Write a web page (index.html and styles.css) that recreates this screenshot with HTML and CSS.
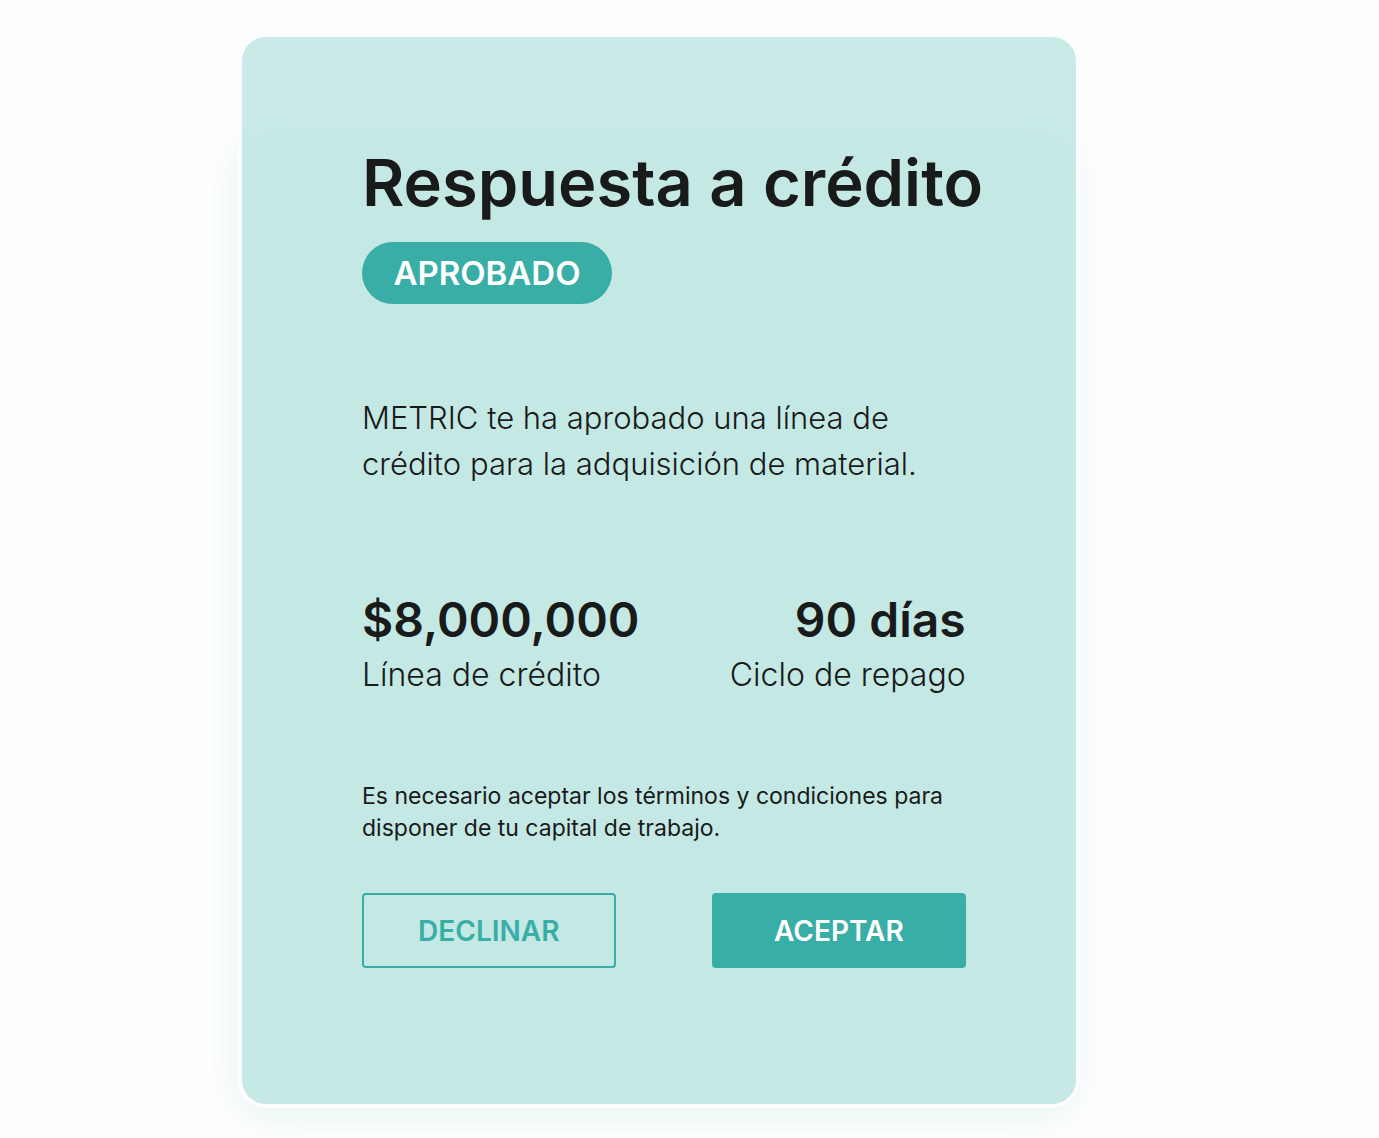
FILE: index.html
```html
<!DOCTYPE html>
<html lang="es">
<head>
  <meta charset="UTF-8">
  <meta name="viewport" content="width=device-width, initial-scale=1.0">
  <title>Respuesta a crédito</title>
  <link rel="stylesheet" href="styles.css">
</head>
<body>

  <main class="card">
    <h1 class="titulo">Respuesta a crédito</h1>
    <span class="estado">APROBADO</span>

    <p class="mensaje">METRIC te ha aprobado una línea de<br>crédito para la adquisición de material.</p>

    <dl class="datos">
      <div class="dato">
        <dt>Línea de crédito</dt>
        <dd>$8,000,000</dd>
      </div>
      <div class="dato derecha">
        <dt>Ciclo de repago</dt>
        <dd>90 días</dd>
      </div>
    </dl>

    <p class="nota">Es necesario aceptar los términos y condiciones para<br>disponer de tu capital de trabajo.</p>

    <div class="acciones">
      <button type="button" class="boton declinar">DECLINAR</button>
      <button type="button" class="boton aceptar">ACEPTAR</button>
    </div>
  </main>

</body>
</html>
```
FILE: styles.css
```css
* {
  box-sizing: border-box;
}
body {
  margin: 0;
  padding: 37px 22% 33px 242px;
  background-color: #fefefe;
  font-family: Inter, Lato, sans-serif;
  color: #191a1a;
}
.card {
  position: relative;
  padding: 104px 110px 136px 120px;
  background-color: rgba(188, 229, 224, 0.8);
  border-radius: 24px;
  box-shadow: 0 0 0 4px #fbfdfe;
}
/* sombra debajo de la tarjeta */
.card::before {
  content: "";
  position: absolute;
  z-index: -1;
  top: 100px;
  right: 0;
  bottom: -14px;
  left: -8px;
  border-radius: 40px;
  background-color: #e6f5f3;
  filter: blur(16px);
}
.titulo {
  margin: 0;
  font-size: 65px;
  font-weight: 600;
  line-height: 84px;
  white-space: nowrap;
}
.estado {
  display: block;
  width: 250px;
  margin-top: 17px;
  border-radius: 31px;
  background-color: #38aea6;
  color: #fff;
  font-size: 33px;
  font-weight: 600;
  line-height: 62px;
  text-align: center;
}
.mensaje {
  margin: 91px 0 0;
  font-size: 31px;
  font-weight: 300;
  line-height: 46px;
  white-space: nowrap;
}
.datos {
  display: flex;
  justify-content: space-between;
  margin: 101px 0 0;
}
.dato {
  display: flex;
  flex-direction: column-reverse;
}
.dato dt {
  font-size: 32px;
  font-weight: 300;
  line-height: 46px;
}
.dato dd {
  margin: 0;
  font-size: 48px;
  font-weight: 600;
  line-height: 64px;
}
.derecha {
  text-align: right;
}
.nota {
  margin: 82px 0 0;
  font-size: 23px;
  line-height: 32px;
  white-space: nowrap;
}
.acciones {
  display: flex;
  justify-content: space-between;
  margin-top: 49px;
}
.boton {
  width: 42%;
  height: 75px;
  border: 2px solid #38aea6;
  border-radius: 4px;
  font-family: inherit;
  font-size: 28px;
  font-weight: 600;
  cursor: pointer;
}
.declinar {
  background-color: transparent;
  color: #38aea6;
}
.aceptar {
  background-color: #38aea6;
  color: #fff;
}
```
